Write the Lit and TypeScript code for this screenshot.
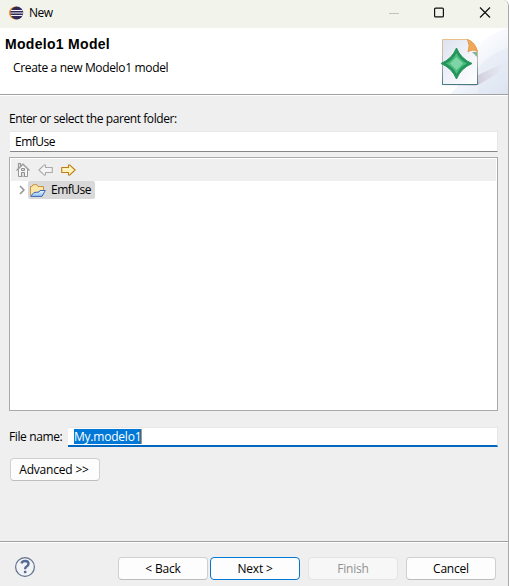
import { LitElement, html, css, svg } from "lit";
import { customElement } from "lit/decorators.js";

const eclipseLogo = svg`
  <svg width="16" height="14" viewBox="0 0 16 14">
    <circle cx="7.3" cy="7" r="6.4" fill="#f59a32"/>
    <circle cx="8.800" cy="7" r="6.4" fill="#302856"/>
    <path d="M3 4.5H14.5M2.500 7H15M3 9.5H14.5" stroke="#f4f2f8" stroke-width="1.1"/>
  </svg>`;

const bannerArt = svg`
  <svg width="86" height="66" viewBox="0 0 86 66">
    <defs>
      <linearGradient id="sky" gradientUnits="userSpaceOnUse" x1="46" y1="14" x2="88" y2="60">
        <stop offset="0" stop-color="#fff"/><stop offset="0.5" stop-color="#eff3fa"/><stop offset="1" stop-color="#dfe6f3"/>
      </linearGradient>
      <linearGradient id="page" x1="0" y1="0" x2="1" y2="1">
        <stop offset="0" stop-color="#dde2ef"/><stop offset="0.6" stop-color="#f3f5fa"/><stop offset="1" stop-color="#fff"/>
      </linearGradient>
      <linearGradient id="edge" x1="0" y1="0" x2="0" y2="1">
        <stop offset="0" stop-color="#e8c08c"/><stop offset="0.45" stop-color="#b9b8ae"/><stop offset="1" stop-color="#477a85"/>
      </linearGradient>
      <linearGradient id="shade" x1="0" y1="0" x2="1" y2="0">
        <stop offset="0" stop-color="#c9c2d0" stop-opacity="0.75"/><stop offset="1" stop-color="#d9d5e3" stop-opacity="0"/>
      </linearGradient>
      <linearGradient id="ground" x1="0" y1="0" x2="1" y2="0">
        <stop offset="0" stop-color="#c9c8d6" stop-opacity="0"/><stop offset="1" stop-color="#b5b3c4"/>
      </linearGradient>
    </defs>
    <path d="M86 0V66H28Q44 52 50 30Q58 8 86 0Z" fill="url(#sky)"/>
    <path d="M86 20Q66 27 56 40V66H86Z" fill="#d9e0ef" opacity="0.3"/>
    <path d="M56 47L84 34Q80 44 68 50L56 57Z" fill="url(#shade)"/>
    <path d="M14 57L20 54H58L54 58H14Z" fill="url(#ground)" opacity="0.6"/>
    <path d="M20.5 11.5H46L55.5 23.5V56.5H20.5Z" fill="url(#page)" stroke="url(#edge)"/>
    <path d="M20.5 56.5H55.5" stroke="#477a85"/>
    <path d="M45.500 11.500Q53 14 55.5 23.5Q50 20.500 46 24Q48.500 17 45.500 11.500Z" fill="#f2a957" stroke="#e29a4c" stroke-width="1"/>
    <path d="M50 24L55 24V29Z" fill="#5c9f7c" opacity="0.75"/>
    <path d="M34.5 20Q39 31 50 35.500Q39 40 34.5 51Q30 40 19 35.500Q30 31 34.5 20Z" fill="#249459" stroke="#249459"/>
    <path d="M34.5 25Q38 32 45 35.500Q38 39 34.500 46Q31 39 24 35.500Q31 32 34.5 25Z" fill="#48bd7e"/>
    <path d="M34.500 29L41 35.500L34.500 42L28 35.500Z" fill="#80d5a7"/>
  </svg>`;

const homeIcon = svg`
  <svg width="14" height="16" viewBox="0 0 14 16">
    <path d="M2.500 7.500V14.500H11.500V7.500L7 3Z" fill="#f5f5f5" stroke="#999"/>
    <path d="M0.500 8.500L7 2L13.500 8.500M2.500 6V1.500H4.500V4" fill="none" stroke="#999" stroke-width="1.2"/>
    <path d="M3 7L7 3L11 7" fill="none" stroke="#bbb"/>
    <path d="M5.500 14.500V10.500H8.500V14.500M5.500 6.500H8.500V8.500H5.500Z" fill="#ddd" stroke="#909090"/>
  </svg>`;

const arrow = (fill: string, stroke: string) => svg`
  <svg width="15" height="12" viewBox="0 0 15 12">
    <path d="M0.700 3.500H7.500V1.200Q8 0.300 8.900 1.100L14.100 6L8.900 10.900Q8 11.700 7.500 10.800V8.500H0.700Z" fill="${fill}" stroke="${stroke}" stroke-width="1.100" stroke-linejoin="round"/>
  </svg>`;

const folderIcon = svg`
  <svg width="16" height="13" viewBox="0 0 16 13">
    <defs><linearGradient id="flap" x1="0" y1="0" x2="0" y2="1"><stop offset="0" stop-color="#eaf7ff"/><stop offset="1" stop-color="#8fc0f2"/></linearGradient></defs>
    <path d="M0.500 11.500V2.500L2 2.500L3 0.700H7L8 2.500H13.500V6.500" fill="#fbe5a8" stroke="#c49545"/>
    <path d="M0.800 12L4 8.500L9 8L10 6.500H15.300L12 12.400H0.800Z" fill="url(#flap)" stroke="#3d66b5"/>
  </svg>`;

const helpIcon = svg`
  <svg width="22" height="22" viewBox="0 0 22 22">
    <circle cx="11" cy="11" r="9.400" fill="#f1f3f7" stroke="#5e7189" stroke-width="1.200"/>
    <path d="M7.500 7.300Q8.300 5 11.200 5Q14.500 5 14.500 7.800Q14.500 9.500 12.600 10.500Q11.100 11.300 11.100 13.200" fill="none" stroke="#566b91" stroke-width="2.400"/>
    <rect x="9.800" y="14.800" width="2.700" height="2.500" rx="1" fill="#566b91"/>
  </svg>`;

@customElement("app-root")
export class AppRoot extends LitElement {
  static styles = css`
    :host {
      display: block;
      font: 12px/16px "Open Sans", "Noto Sans", sans-serif;
      color: #000;
      letter-spacing: -0.18px;
    }
    * { box-sizing: border-box; }
    svg { display: block; flex: none; }
    .window {
      width: 509px; height: 586px;
      display: flex; flex-direction: column;
      background: #efefef;
      border-right: 1px solid #a9a9a9;
      border-top-right-radius: 6px;
      overflow: hidden;
    }
    .titlebar {
      height: 28px; flex: none;
      display: flex; align-items: center;
      padding: 0 17px 3px 8px;
      background: #f2f4eb;
    }
    .titlebar .name { margin-left: 5px; flex: 1; letter-spacing: -0.45px; }
    .banner {
      height: 67px; flex: none;
      display: flex; justify-content: space-between;
      background: #fff;
      border-bottom: 1px solid #a0a0a0;
    }
    .heading { padding: 8px 0 0 5px; }
    h1 { margin: 0; font: bold 14px/16px "Liberation Sans", sans-serif; letter-spacing: 0.3px; }
    .sub { margin: 8px 0 0 8px; letter-spacing: -0.34px; }
    .content { flex: 1; padding: 15px 10px 0 9px; border-top: 1px solid #fff; }
    .prompt { letter-spacing: -0.42px; }
    .field {
      height: 21px; margin: 4px 0 0 1px; padding: 2px 5px 0; letter-spacing: -0.5px;
      background: #fff; border: 1px solid #e7e7e7; border-left: 0; border-bottom-color: #868686;
    }
    .tree {
      height: 254px; margin-top: 5px; padding: 1px;
      background: #fff; border: 1px solid #aaa;
    }
    .tools { height: 22px; display: flex; align-items: center; gap: 8px; padding-left: 5px; background: #efefef; }
    .flip { transform: scaleX(-1); }
    .row { display: flex; align-items: center; padding-left: 8px; }
    .item {
      display: flex; align-items: center; gap: 5px;
      height: 18px; width: 67px; margin-left: 3px; padding-left: 2px; letter-spacing: -0.5px;
      background: #d9d9d9; border-radius: 2px;
    }
    .file { display: flex; align-items: center; margin-top: 16px; height: 20px; }
    .file .label { width: 59px; letter-spacing: -0.38px; }
    .file .entry {
      flex: 1; height: 20px; padding: 1px 6px 0;
      background: #fff; border: 1px solid #e7e7e7; border-left: 0; border-bottom: 2px solid #0067c0;
    }
    .selected { display: inline-block; height: 15px; line-height: 16px; letter-spacing: -0.22px; background: #0078d7; color: #fff; border-right: 1px solid #d98a4a; }
    button {
      width: 90px; height: 23px; padding: 1px 0 0;
      font: inherit; letter-spacing: -0.2px; color: #000;
      background: #fdfdfd; border: 1px solid #d0d0d0; border-bottom-color: #bdbdbd; border-radius: 4px;
    }
    .advanced { display: block; margin: 11px 0 0 1px; padding: 1px 2px 0 0; }
    .footer {
      height: 45px; flex: none;
      display: flex; align-items: flex-start;
      padding: 14px 12px 0 14px;
      border-top: 1px solid #a0a0a0; box-shadow: inset 0 1px #fff;
    }
    .actions { display: flex; margin: 1px 0 0 auto; }
    .next { margin: 0 8px 0 2px; border-color: #0078d4; }
    .finish { margin-right: 8px; background: #f7f7f7; border-color: #e4e4e4; color: #929292; }
  `;

  render() {
    return html`
      <div class="window">
        <div class="titlebar">
          ${eclipseLogo}<span class="name">New</span>
          <svg width="104" height="12" viewBox="0 0 104 12">
            <path d="M2 6.500H12" stroke="#c0c2bb"/>
            <rect x="47.600" y="1.100" width="8.800" height="8.800" rx="1" fill="none" stroke="#111" stroke-width="1.200"/>
            <path d="M93 0.500L103 10.500M103 0.500L93 10.500" stroke="#111" stroke-width="1.200"/>
          </svg>
        </div>
        <div class="banner">
          <div class="heading">
            <h1>Modelo1 Model</h1>
            <div class="sub">Create a new Modelo1 model</div>
          </div>
          ${bannerArt}
        </div>
        <div class="content">
          <div class="prompt">Enter or select the parent folder:</div>
          <div class="field">EmfUse</div>
          <div class="tree">
            <div class="tools">
              ${homeIcon}
              <span class="flip">${arrow("#f4f4f4", "#aaa")}</span>
              ${arrow("#fff3bb", "#bd7c18")}
            </div>
            <div class="row">
              <svg width="6" height="10" viewBox="0 0 6 10"><path d="M1 1L5 5L1 9" fill="none" stroke="#929292" stroke-width="1.500"/></svg>
              <div class="item">${folderIcon}<span>EmfUse</span></div>
            </div>
          </div>
          <div class="file">
            <span class="label">File name:</span>
            <div class="entry"><span class="selected">My.modelo1</span></div>
          </div>
          <button class="advanced">Advanced &gt;&gt;</button>
        </div>
        <div class="footer">
          ${helpIcon}
          <div class="actions">
            <button>&lt; Back</button>
            <button class="next">Next &gt;</button>
            <button class="finish" disabled>Finish</button>
            <button>Cancel</button>
          </div>
        </div>
      </div>
    `;
  }
}
